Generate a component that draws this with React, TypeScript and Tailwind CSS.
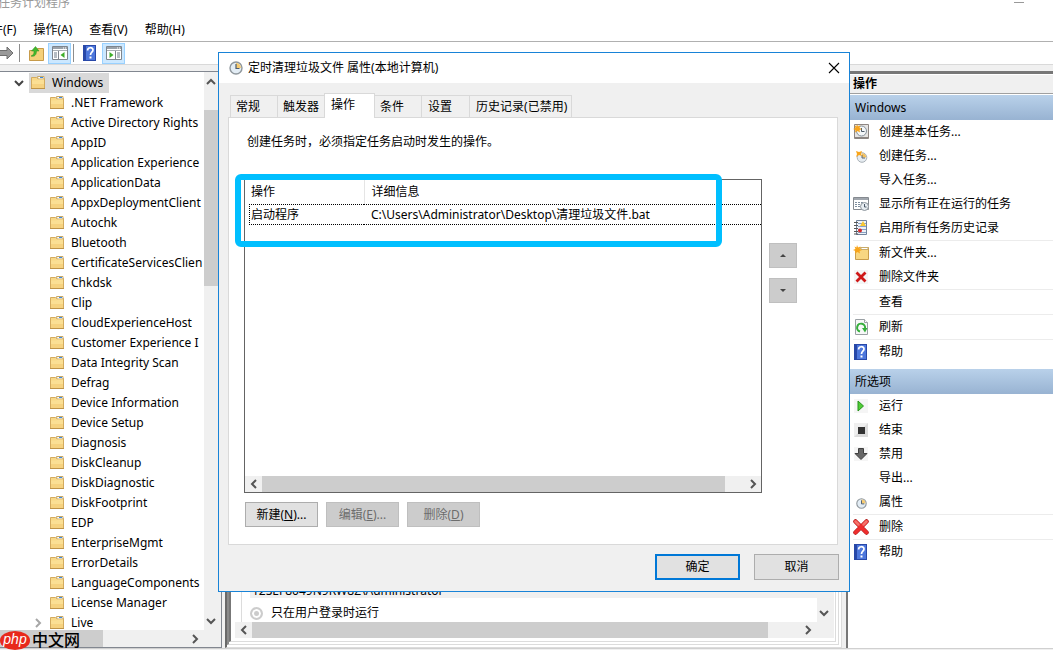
import { useState } from 'react';
import type { ReactNode } from 'react';

const folders = [
  '.NET Framework',
  'Active Directory Rights',
  'AppID',
  'Application Experience',
  'ApplicationData',
  'AppxDeploymentClient',
  'Autochk',
  'Bluetooth',
  'CertificateServicesClien',
  'Chkdsk',
  'Clip',
  'CloudExperienceHost',
  'Customer Experience I',
  'Data Integrity Scan',
  'Defrag',
  'Device Information',
  'Device Setup',
  'Diagnosis',
  'DiskCleanup',
  'DiskDiagnostic',
  'DiskFootprint',
  'EDP',
  'EnterpriseMgmt',
  'ErrorDetails',
  'LanguageComponents',
  'License Manager',
  'Live',
];

const tabs = ['常规', '触发器', '操作', '条件', '设置', '历史记录(已禁用)'];

function FolderIcon() {
  return (
    <svg width="14" height="14" viewBox="0 0 14 14" className="shrink-0">
      <path d="M0.5 1.5h5l1 1h7v10h-13z" fill="#f8d888" stroke="#d3ab5f" />
      <path d="M6.500 0.500h6.500v2.500h-6z" fill="#fff" stroke="#c9a866" />
      <path d="M9 1.500h3" stroke="#3d8be0" />
      <path d="M1 4.500h5.500l1-1H13V12H1z" fill="#fbdf94" />
      <path d="M1 8h12v4H1z" fill="#f6d280" />
      <path d="M0 12.500h14" stroke="#bf9448" />
    </svg>
  );
}

function Clock({ size = 14 }: { size?: number }) {
  return (
    <svg width={size} height={size} viewBox="0 0 14 14" className="shrink-0">
      <circle cx="7" cy="7" r="6" fill="#e3edf5" stroke="#8f979d" strokeWidth="1.4" />
      <path d="M7 7V2a5 5 0 0 1 5 5z" fill="#f6cb72" />
      <path d="M7 3v4.5h3.5" fill="none" stroke="#4b5b70" strokeWidth="1.2" />
    </svg>
  );
}

function HelpIcon() {
  return (
    <svg width="13" height="16" viewBox="0 0 13 16" className="shrink-0">
      <path d="M0 0h13v16H0z" fill="#2848a8" />
      <path d="M3 1h9v14H3z" fill="#4d77dc" />
      <path d="M4.6 5.4C4.6 1.8 10 2 10 5c0 2.200-2.500 2.300-2.500 5" fill="none" stroke="#fff" strokeWidth="1.700" />
      <path d="M6.500 11.500h2v2h-2z" fill="#fff" />
    </svg>
  );
}

function PaneIcon({ flip }: { flip?: boolean }) {
  return (
    <svg width="16" height="14" viewBox="0 0 16 14">
      <path d="M0.500 0.500h15v13h-15z" fill="#fff" stroke="#7e858d" />
      <path d="M1 1h14v2H1z" fill="#9aa2aa" />
      <path d="M1 4.500h14" stroke="#a9afb5" />
      <path d="M11 2h1M13 2h1" stroke="#fff" />
      {flip ? (
        <>
          <path d="M9.500 5v8" stroke="#7e858d" />
          <path d="M11 7h3M11 9h3M11 11h3" stroke="#6c7a88" />
          <path d="M3.500 6v6L7.500 9z" fill="#3fae2a" />
        </>
      ) : (
        <>
          <path d="M6.500 5v8" stroke="#7e858d" />
          <path d="M2 7h3M2 9h3M2 11h3" stroke="#6c7a88" />
          <path d="M12.500 6v6L8.500 9z" fill="#3fae2a" />
        </>
      )}
    </svg>
  );
}

function Star() {
  return <path d="M4 0l1 2.500 2.500-1L6.500 4 9 5 6.500 6l.5 2.500L4.500 7 2 8.500 2.500 6 0 5l2.500-1L1.500 1.500 3.500 2.500z" fill="#f9a51a" />;
}

type IconName = 'basic' | 'task' | 'running' | 'history' | 'newFolder' | 'cross' | 'refresh' | 'help' | 'run' | 'end' | 'disable' | 'props' | 'delete';

function ActionIcon({ name }: { name: IconName }) {
  if (name === 'help') return <span className="pl-px"><HelpIcon /></span>;
  if (name === 'props') {
    return <span className="pl-[3px] pt-[2px]"><Clock size={11} /></span>;
  }
  return (
    <svg width="16" height="16" viewBox="0 0 16 16" className="shrink-0">
      {name === 'basic' && (
        <>
          <path d="M1.500 0.500h14v14h-14z" fill="#e6e4e2" stroke="#8e8682" />
          <path d="M2 13h13v2H2z" fill="#8b8582" />
          <circle cx="8.500" cy="7" r="5" fill="#f3f6f8" stroke="#85909a" />
          <path d="M8.500 4v3.500h3" fill="none" stroke="#4c5a68" />
          <Star />
        </>
      )}
      {name === 'task' && (
        <g transform="translate(3 3)">
          <circle cx="6" cy="6.500" r="4.800" fill="#e6ecf1" stroke="#a9b0b6" />
          <path d="M6 6.500V2.200a4.300 4.300 0 0 1 4.300 4.300z" fill="#f4c15d" />
          <path d="M6 4v3h3" fill="none" stroke="#59677a" />
          <path d="M0 0l3 1 3-1-1 3 1 2-3-1-3 2 1-3z" fill="#f9a51a" />
        </g>
      )}
      {name === 'running' && (
        <>
          <path d="M0.500 1.500h15v12h-15z" fill="#fff" stroke="#858a90" />
          <path d="M1 2h14v2H1z" fill="#a0a6ad" />
          <path d="M2 6.500h8M2 8.500h6M2 10.500h5" stroke="#7e8e9e" strokeDasharray="2 1" />
          <circle cx="11.500" cy="10.500" r="4" fill="#e6ecf1" stroke="#8c949b" />
          <path d="M11.500 8v3h2" fill="none" stroke="#4c5a68" />
        </>
      )}
      {name === 'history' && (
        <>
          <path d="M3.500 0.500h10v14h-10z" fill="#edf2f8" stroke="#71839c" />
          <path d="M5 3.500h8M5 6.500h8M5 9.500h8M5 12.500h8" stroke="#89a2c4" />
          <path d="M1 2.500h4M1 5.500h4M1 8.500h4M1 11.500h4M1 14h4" stroke="#555" />
          <path d="M10 1l3 5H7z" fill="#f9c832" />
          <circle cx="7" cy="10.500" r="2" fill="#d32a2a" />
        </>
      )}
      {name === 'newFolder' && (
        <>
          <path d="M2.500 4.500h4l1-2h8v12h-13z" fill="#f8d681" stroke="#c99d4b" />
          <path d="M8 2.500h7v2H8z" fill="#fff" stroke="#c8ab6a" />
          <Star />
        </>
      )}
      {name === 'cross' && (
        <>
          <path d="M1 1h14v14H1z" fill="#f5f5f5" />
          <path d="M3.500 3.500l9 9M12.500 3.500l-9 9" stroke="#cf1717" strokeWidth="2.800" />
        </>
      )}
      {name === 'refresh' && (
        <>
          <path d="M2.500 0.500h9l3 3v12h-12z" fill="#f7f8f8" stroke="#9aa0a4" />
          <path d="M11.500 0.500v3h3" fill="#fff" stroke="#9aa0a4" />
          <path d="M7 12.500a4 4 0 1 1 5-3" fill="none" stroke="#35ae3b" strokeWidth="2" />
          <path d="M9 9h5.500L12 13.500z" fill="#35ae3b" />
        </>
      )}
      {name === 'run' && (
        <>
          <path d="M1 1h14v14H1z" fill="#f5f5f5" />
          <path d="M5 3l5.500 5-5.500 5z" fill="#4fce35" stroke="#27921c" />
        </>
      )}
      {name === 'end' && (
        <>
          <path d="M1 1h14v14H1z" fill="#dcdcdc" />
          <path d="M1 1h14L1 15z" fill="#efefef" />
          <path d="M5 5h7v7H5z" fill="#333" />
        </>
      )}
      {name === 'disable' && (
        <>
          <path d="M1 1h14v14H1z" fill="#f5f5f5" />
          <path d="M5.500 2.500h5v5h3.500L8 13.500 2 7.500h3.500z" fill="#666" stroke="#3f3f3f" />
        </>
      )}
      {name === 'delete' && (
        <>
          <path d="M2.500 2.500l11 11M13.500 2.500l-11 11" stroke="#a91717" strokeWidth="4.500" strokeLinecap="round" />
          <path d="M2.500 2.500l11 11M13.500 2.500l-11 11" stroke="#ee2e2e" strokeWidth="3.500" strokeLinecap="round" />
          <path d="M2.500 2.500l3 3M13.500 2.500l-3 3" stroke="#f4736b" strokeWidth="2.500" strokeLinecap="round" />
        </>
      )}
    </svg>
  );
}

const arrowPaths = {
  up: 'M1 7l4-4 4 4',
  down: 'M1 3l4 4 4-4',
  left: 'M7 1L3 5l4 4',
  right: 'M3 1l4 4-4 4',
};

function Arrow({ dir, color = '#555' }: { dir: keyof typeof arrowPaths; color?: string }) {
  return (
    <svg width="10" height="10" viewBox="0 0 10 10">
      <path d={arrowPaths[dir]} fill="none" stroke={color} strokeWidth="2" />
    </svg>
  );
}

function HScroll({ children }: { children: ReactNode }) {
  return (
    <div className="flex h-4 shrink-0 bg-[#f0f0f0]">
      <button type="button" aria-label="向左滚动" className="flex w-[17px] items-center justify-center"><Arrow dir="left" /></button>
      <div className="flex flex-1">{children}</div>
      <button type="button" aria-label="向右滚动" className="flex w-[17px] items-center justify-center"><Arrow dir="right" /></button>
    </div>
  );
}

function Action({ icon, children }: { icon?: IconName; children: ReactNode }) {
  return (
    <button type="button" className="flex h-6 w-full items-center hover:bg-[#e5f3ff]">
      <span className="flex w-[26px] items-center">{icon && <ActionIcon name={icon} />}</span>
      {children}
    </button>
  );
}

function Separator() {
  return <div className="h-px bg-[#ececec]" />;
}

function TreePane() {
  return (
    <nav className="flex w-[222px] shrink-0 flex-col border-y border-r border-[#828790] bg-white">
      <div className="flex min-h-0 flex-1">
        <ul className="min-w-0 flex-1 overflow-hidden pt-px">
          <li>
            <button type="button" className="flex h-5 items-center pl-[14px]">
              <Arrow dir="down" color="#444" />
              <span className="ml-[5px] flex h-5 items-center gap-[7px] bg-[#d9d9d9] pl-[2px] pr-[6px]">
                <FolderIcon />
                Windows
              </span>
            </button>
          </li>
          {folders.map(name => (
            <li key={name}>
              <button type="button" className="flex h-5 w-full items-center whitespace-nowrap">
                <span className="flex w-[50px] shrink-0 justify-end pr-[7px]">
                  {name === 'Live' && <Arrow dir="right" color="#a6a6a6" />}
                </span>
                <FolderIcon />
                <span className="ml-[7px]">{name}</span>
              </button>
            </li>
          ))}
        </ul>
        <div className="flex w-[17px] flex-col bg-[#f0f0f0]">
          <button type="button" aria-label="向上滚动" className="flex h-[19px] items-center pl-[2px]"><Arrow dir="up" /></button>
          <div className="mt-[19px] h-44 w-full bg-[#cdcdcd]" />
          <button type="button" aria-label="向下滚动" className="mt-auto flex h-[19px] items-center pl-[2px]"><Arrow dir="down" /></button>
        </div>
      </div>
      <div className="flex h-[17px] items-center bg-[#f0f0f0]">
        <div className="h-full w-[103px] bg-[#cdcdcd]" />
        <button type="button" aria-label="向右滚动" className="ml-auto mr-[21px] flex"><Arrow dir="right" /></button>
      </div>
    </nav>
  );
}

function DetailPane() {
  return (
    <main className="flex min-w-0 flex-1 flex-col bg-[#f0f0f0] pl-[3px] pr-1">
      <div className="flex flex-1 border-b border-l-2 border-r border-b-[#dcdcdc] border-l-[#696969] border-r-[#dcdcdc] bg-white pb-[2px] pr-[2px]">
        <div className="flex flex-1 border-b border-l-2 border-r border-b-[#dcdcdc] border-l-[#8a8a8a] border-r-[#dcdcdc] pb-[2px] pr-[2px]">
          <div className="flex flex-1 flex-col justify-end border-b border-l-2 border-r border-b-[#dcdcdc] border-l-[#777] border-r-[#dcdcdc] pb-[3px] pl-1 pr-px">
            <div className="flex">
              <div className="ml-[6px] flex-1 border-l border-[#dcdcdc] pl-2">
                <p className="bg-[#f0f0f0] pl-[2px] leading-[14px]">12SEF8049N9RW8Z\Administrator</p>
                <label className="flex h-6 items-center gap-2 pt-[6px]">
                  <input type="radio" name="logon" defaultChecked disabled className="h-[13px] w-[13px] appearance-none rounded-full border-2 border-[#ccc] bg-[#ccc] shadow-[inset_0_0_0_2px_#fff]" />
                  只在用户登录时运行
                </label>
              </div>
              <div className="flex w-[17px] items-end bg-[#f0f0f0] pb-1 pl-[2px]"><Arrow dir="down" /></div>
            </div>
            <div className="flex bg-[#f0f0f0] pr-[18px]">
              <div className="flex-1">
                <HScroll><div className="mr-[31px] flex-1 bg-[#cdcdcd]" /></HScroll>
              </div>
            </div>
          </div>
        </div>
      </div>
    </main>
  );
}

function ActionsPane() {
  return (
    <aside className="w-[207px] shrink-0 border-l-2 border-t-[3px] border-[#777] bg-white">
      <h2 className="mt-px h-[19px] border-b border-[#a0a0a0] bg-[#f0f0f0] pl-[5px] font-bold leading-[18px]">操作</h2>
      <h3 className="mt-px h-[25px] bg-linear-to-b from-[#b9d1ea] to-[#98b3d2] pl-[7px] leading-[25px]">Windows</h3>
      <div className="pl-[5px]">
        <Action icon="basic">创建基本任务...</Action>
        <Action icon="task">创建任务...</Action>
        <Action>导入任务...</Action>
        <Action icon="running">显示所有正在运行的任务</Action>
        <Action icon="history">启用所有任务历史记录</Action>
        <Separator />
        <Action icon="newFolder">新文件夹...</Action>
        <Action icon="cross">删除文件夹</Action>
        <Separator />
        <Action>查看</Action>
        <Separator />
        <Action icon="refresh">刷新</Action>
        <Separator />
        <Action icon="help">帮助</Action>
      </div>
      <h3 className="mt-[5px] h-[25px] bg-linear-to-b from-[#b9d1ea] to-[#98b3d2] pl-[7px] leading-[25px]">所选项</h3>
      <div className="pl-[5px]">
        <Action icon="run">运行</Action>
        <Action icon="end">结束</Action>
        <Action icon="disable">禁用</Action>
        <Action>导出...</Action>
        <Action icon="props">属性</Action>
        <Separator />
        <Action icon="delete">删除</Action>
        <Separator />
        <Action icon="help">帮助</Action>
      </div>
    </aside>
  );
}

function PropertiesDialog() {
  const [tab, setTab] = useState('操作');

  return (
    <div role="dialog" aria-label="定时清理垃圾文件 属性" className="absolute left-[218px] top-[52px] w-[632px] border border-[#1883d7] bg-[#f0f0f0]">
      <div className="flex h-[30px] items-center bg-white pl-[10px] pr-[9px]">
        <Clock />
        <span className="ml-[5px]">定时清理垃圾文件 属性(本地计算机)</span>
        <button type="button" aria-label="关闭" className="ml-auto">
          <svg width="12" height="12" viewBox="0 0 12 12"><path d="M1 1l10 10M11 1L1 11" stroke="#000" strokeWidth="1.100" /></svg>
        </button>
      </div>

      <div className="pb-[11px] pl-[9px] pr-[11px] pt-[10px]">
        <div role="tablist" className="flex items-end pl-[2px]">
          {tabs.map(t => (
            <button
              key={t}
              type="button"
              role="tab"
              aria-selected={t === tab}
              onClick={() => setTab(t)}
              className={t === tab
                ? 'relative -mb-px h-[25px] border border-b-0 border-[#d9d9d9] bg-white pb-[2px] pl-[6px] pr-[19px]'
                : 'h-[22px] border-l border-t border-[#d9d9d9] pl-[5px] pr-[17px] nth-2:pr-[5px] nth-4:border-l-0 nth-5:pl-[6px] last:border-r last:pl-[6px] last:pr-1'}
            >
              {t}
            </button>
          ))}
        </div>

        <div className="border border-[#d9d9d9] bg-white pb-[17px] pl-[15px] pr-10">
          <p className="pl-[3px] pt-4 leading-4">创建任务时，必须指定任务启动时发生的操作。</p>
          <div className="mt-[29px] flex gap-[7px]">
            <div className="relative flex h-[314px] flex-1 flex-col border border-[#646464]">
              <table className="w-full table-fixed border-collapse text-left">
                <thead>
                  <tr className="h-6">
                    <th className="w-[119px] border-r border-[#e5e5e5] p-0 pl-[6px] font-normal">操作</th>
                    <th className="p-0 pl-[7px] font-normal">详细信息</th>
                  </tr>
                </thead>
                <tbody>
                  <tr className="h-5">
                    <td className="p-0 pl-1">
                      <span className="block h-[21px] border-y border-l border-dotted border-black pl-px leading-[19px]">启动程序</span>
                    </td>
                    <td className="p-0">
                      <span className="block h-[21px] border-y border-dotted border-black pl-[7px] leading-[19px]">C:\Users\Administrator\Desktop\清理垃圾文件.bat</span>
                    </td>
                  </tr>
                </tbody>
              </table>
              <div className="mt-auto">
                <HScroll><div className="mr-[19px] flex-1 bg-[#cdcdcd]" /></HScroll>
              </div>
              <div className="pointer-events-none absolute -left-[10px] -top-[6px] h-[73px] w-[487px] rounded-md border-6 border-[#00bfff]" />
            </div>
            <div className="flex flex-col gap-[10px] pt-16">
              <button type="button" aria-label="上移" disabled className="flex h-[25px] w-7 items-center justify-center border border-[#bfbfbf] bg-[#ccc]">
                <svg width="6" height="3" viewBox="0 0 6 3"><path d="M0 3l3-3 3 3z" fill="#444" /></svg>
              </button>
              <button type="button" aria-label="下移" disabled className="flex h-[25px] w-7 items-center justify-center border border-[#bfbfbf] bg-[#ccc]">
                <svg width="6" height="3" viewBox="0 0 6 3"><path d="M0 0l3 3 3-3z" fill="#444" /></svg>
              </button>
            </div>
          </div>
          <div className="mt-[9px] flex gap-2 pl-px">
            <button type="button" className="h-[25px] w-[73px] border border-[#adadad] bg-[#e1e1e1]">新建(<u>N</u>)...</button>
            <button type="button" disabled className="h-[25px] w-[73px] border border-[#bfbfbf] bg-[#ccc] text-[#6d6d6d]">编辑(<u>E</u>)...</button>
            <button type="button" disabled className="h-[25px] w-[73px] border border-[#bfbfbf] bg-[#ccc] text-[#6d6d6d]">删除(<u>D</u>)</button>
          </div>
        </div>

        <div className="-mr-px mt-[9px] flex justify-end gap-[14px]">
          <button type="button" className="h-[26px] w-[85px] border-2 border-[#0078d7] bg-[#e1e1e1]">确定</button>
          <button type="button" className="h-[26px] w-[85px] border border-[#adadad] bg-[#e1e1e1]">取消</button>
        </div>
      </div>
    </div>
  );
}

export default function App() {
  return (
    <div className="relative flex h-screen min-h-[650px] flex-col overflow-hidden bg-white font-['Noto_Sans','Noto_Sans_CJK_SC',sans-serif] text-xs text-black">
      <header className="flex h-[18px] justify-between pr-[29px]">
        <h1 className="-ml-[2px] leading-[6px] text-[#999]">任务计划程序</h1>
        <button type="button" aria-label="最小化" className="mt-[2px] h-px w-[10px] bg-[#999]" />
      </header>
      <div className="-ml-[21px] flex h-[23px] items-center gap-[17px]">
        <button type="button">文件(F)</button>
        <button type="button">操作(A)</button>
        <button type="button">查看(V)</button>
        <button type="button">帮助(H)</button>
      </div>
      <div className="flex h-[24px] shrink-0 items-center border-b border-t border-b-[#d9d9d9] border-t-[#b0b0b0]">
        <button type="button" aria-label="前进">
          <svg width="14" height="14" viewBox="0 0 14 14"><path d="M-2 4.500h9v-3.500l6 6-6 6V9.500h-9z" fill="#999" stroke="#6e6e6e" /></svg>
        </button>
        <div className="ml-[5px] h-[18px] w-px bg-[#8d8d8d]" />
        <button type="button" aria-label="向上" className="ml-[9px]">
          <svg width="15" height="15" viewBox="0 0 15 15">
            <path d="M0.500 4.500h7l1-2h6v12h-14z" fill="#f5d07a" stroke="#c79b4a" />
            <path d="M2 10c3-1 3-3 3-5H2.500L6.500 0.500 10 5H7.500c0 4-2 6-5.500 5z" fill="#43b82d" stroke="#2c8c1d" strokeWidth=".5" />
          </svg>
        </button>
        <button type="button" aria-label="显示控制台树" className="ml-1 flex h-[21px] w-[23px] items-center justify-center border border-[#99d1ff] bg-[#cce8ff]"><PaneIcon /></button>
        <div className="ml-[2px] h-[18px] w-px bg-[#8d8d8d]" />
        <button type="button" aria-label="帮助" className="ml-[9px]"><HelpIcon /></button>
        <button type="button" aria-label="显示操作窗格" className="ml-[6px] flex h-[21px] w-[23px] items-center justify-center border border-[#99d1ff] bg-[#cce8ff]"><PaneIcon flip /></button>
      </div>
      <div className="flex min-h-0 flex-1 bg-[#f0f0f0] pt-[6px]">
        <TreePane />
        <DetailPane />
        <ActionsPane />
      </div>
      <footer className="h-[2px] shrink-0 border-t border-[#d0d0d0] bg-[#f0f0f0]" />

      <PropertiesDialog />

      <div className="absolute bottom-0 left-0 flex h-5 items-center">
        <span className="flex h-[19px] w-[30px] items-center justify-center rounded-[50%] bg-[#e8291c] pb-[3px] font-['Liberation_Sans',sans-serif] text-sm italic text-white">php</span>
        <span className="ml-[2px] text-base font-medium">中文网</span>
      </div>
    </div>
  );
}
